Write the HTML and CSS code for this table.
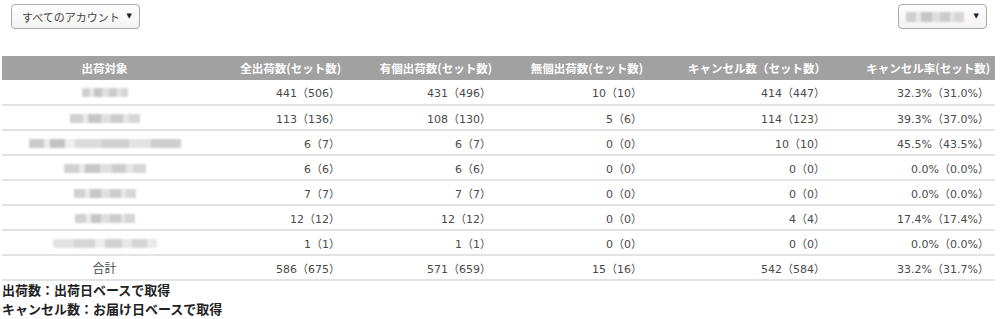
FILE: index.html
```html
<!DOCTYPE html>
<html lang="ja">
<head>
<meta charset="utf-8">
<link rel="stylesheet" href="styles.css">
</head>
<body>
<div class="toolbar">
  <div class="select select-account"><span class="select-label">すべてのアカウント</span><span class="caret">▼</span></div>
  <div class="select select-period"><span class="blur blur-sel"></span><span class="caret">▼</span></div>
</div>
<table class="report">
  <thead>
    <tr>
      <th class="c-name">出荷対象</th>
      <th class="c2">全出荷数(セット数)</th>
      <th class="c3">有個出荷数(セット数)</th>
      <th class="c4">無個出荷数(セット数)</th>
      <th class="c5">キャンセル数（セット数）</th>
      <th class="c6">キャンセル率(セット数)</th>
    </tr>
  </thead>
  <tbody>
    <tr><td class="c-name"><span class="blur" style="width:46px"></span></td><td>441（506）</td><td>431（496）</td><td>10（10）</td><td>414（447）</td><td>32.3%（31.0%）</td></tr>
    <tr><td class="c-name"><span class="blur" style="width:70px"></span></td><td>113（136）</td><td>108（130）</td><td>5（6）</td><td>114（123）</td><td>39.3%（37.0%）</td></tr>
    <tr><td class="c-name"><span class="blur blur-long" style="width:152px"></span></td><td>6（7）</td><td>6（7）</td><td>0（0）</td><td>10（10）</td><td>45.5%（43.5%）</td></tr>
    <tr><td class="c-name"><span class="blur" style="width:82px"></span></td><td>6（6）</td><td>6（6）</td><td>0（0）</td><td>0（0）</td><td>0.0%（0.0%）</td></tr>
    <tr><td class="c-name"><span class="blur" style="width:62px"></span></td><td>7（7）</td><td>7（7）</td><td>0（0）</td><td>0（0）</td><td>0.0%（0.0%）</td></tr>
    <tr><td class="c-name"><span class="blur" style="width:60px"></span></td><td>12（12）</td><td>12（12）</td><td>0（0）</td><td>4（4）</td><td>17.4%（17.4%）</td></tr>
    <tr><td class="c-name"><span class="blur blur-light" style="width:104px"></span></td><td>1（1）</td><td>1（1）</td><td>0（0）</td><td>0（0）</td><td>0.0%（0.0%）</td></tr>
    <tr><td class="c-name total">合計</td><td>586（675）</td><td>571（659）</td><td>15（16）</td><td>542（584）</td><td>33.2%（31.7%）</td></tr>
  </tbody>
</table>
<div class="notes">
  <p>出荷数：出荷日ベースで取得</p>
  <p>キャンセル数：お届け日ベースで取得</p>
</div>
</body>
</html>
```

FILE: styles.css
```css
html, body {
  margin: 0;
  padding: 0;
  background: #fff;
}
body {
  font-family: "DejaVu Sans", "Noto Sans CJK JP", sans-serif;
  font-size: 11px;
  color: #4a4a4a;
  width: 1000px;
  height: 319px;
  overflow: hidden;
}
.toolbar {
  display: flex;
  justify-content: space-between;
  align-items: flex-start;
  padding: 4px 13px 0 11px;
  height: 56px;
  box-sizing: border-box;
}
.select {
  display: flex;
  align-items: center;
  justify-content: space-between;
  height: 25px;
  box-sizing: border-box;
  border: 1px solid #a9a9a9;
  border-radius: 4px;
  background: linear-gradient(#fdfdfd, #f3f3f3);
  padding: 0 7px 0 10px;
  white-space: nowrap;
}
.select-account { width: 129px; }
.select-period { width: 89px; padding-left: 7px; }
.select-label {
  font-family: "Noto Sans CJK JP", sans-serif;
  font-size: 11px;
  color: #444;
}
.caret {
  font-size: 7px;
  color: #222;
  line-height: 1;
}
.blur {
  display: inline-block;
  height: 9px;
  vertical-align: middle;
  background:
    linear-gradient(90deg,
      #c9c9c9 0 18%, #e6e6e6 18% 26%, #bdbdbd 26% 44%,
      #dadada 44% 58%, #c4c4c4 58% 76%, #e2e2e2 76% 84%, #cfcfcf 84% 100%);
  filter: blur(1.3px);
  opacity: 0.85;
}
.blur-sel { width: 58px; height: 10px; }
.blur-long {
  background:
    linear-gradient(90deg,
      #c2c2c2 0 10%, #e8e8e8 10% 14%, #b8b8b8 14% 24%, #ececec 24% 30%,
      #d5d5d5 30% 48%, #c8c8c8 48% 66%, #dedede 66% 80%, #c6c6c6 80% 100%);
}
.blur-light {
  background:
    linear-gradient(90deg,
      #dedede 0 20%, #cfcfcf 20% 40%, #ebebeb 40% 50%, #c9c9c9 50% 66%,
      #e4e4e4 66% 76%, #cdcdcd 76% 90%, #e6e6e6 90% 100%);
}
.report {
  margin-left: 2px;
  width: 993px;
  border-collapse: collapse;
  table-layout: fixed;
}
.report th {
  background: #a1a1a1;
  color: #fff;
  font-family: "Noto Sans CJK JP", sans-serif;
  font-weight: bold;
  font-size: 11.5px;
  height: 24px;
  box-sizing: border-box;
  padding: 0 5px 0 0;
  text-align: right;
  white-space: nowrap;
}
.report th.c-name { text-align: center; width: 205px; padding: 0; }
.report th.c2 { width: 139px; }
.report th.c3 { width: 151px; }
.report th.c4 { width: 151px; }
.report th.c5 { width: 183px; }
.report td {
  height: 25px;
  box-sizing: border-box;
  padding: 0 6px 0 0;
  text-align: right;
  border-bottom: 2px solid #e3e3e3;
  white-space: nowrap;
}
.report td.c-name { text-align: center; padding: 0; }
.report td.total {
  font-family: "Noto Sans CJK JP", sans-serif;
  font-size: 12px;
}
.notes {
  font-family: "Noto Sans CJK JP", sans-serif;
  font-weight: bold;
  font-size: 13px;
  color: #222;
  padding-left: 2px;
  margin-top: -1px;
}
.notes p {
  margin: 0;
  line-height: 19px;
}
```
